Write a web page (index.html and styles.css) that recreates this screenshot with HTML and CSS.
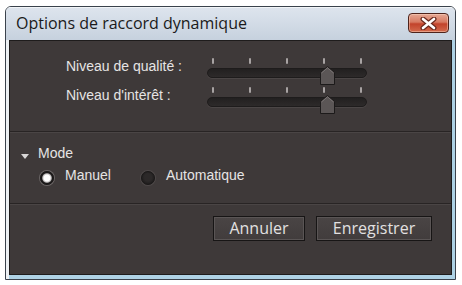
FILE: index.html
```html
<!DOCTYPE html>
<html lang="fr">
<head>
  <meta charset="UTF-8" />
  <title>Options de raccord dynamique</title>
  <link rel="stylesheet" href="styles.css">
</head>
<body>

  <div class="window">
    <!-- Title bar -->
    <div class="titlebar">
      <span class="title">Options de raccord dynamique</span>
      <button class="close" aria-label="Fermer">
        <svg width="17" height="13" viewBox="0 0 17 13">
          <path d="M3 2 L14 11 M14 2 L3 11" stroke="#6a2a1e" stroke-width="5" stroke-linecap="round" />
          <path d="M3 2 L14 11 M14 2 L3 11" stroke="#ffffff" stroke-width="2.6" stroke-linecap="round" />
        </svg>
      </button>
    </div>

    <div class="frame">
      <div class="content">

        <!-- Sliders -->
        <div class="section sliders">
          <div class="row">
            <span class="label">Niveau de qualité :</span>
            <div class="slider">
              <div class="ticks"><i></i><i></i><i></i><i></i><i></i></div>
              <div class="track"></div>
              <svg class="thumb" style="left: 113px" width="15" height="19" viewBox="0 0 15 19">
                <polygon points="7.5,0.5 14.5,6.5 14.5,18.5 0.5,18.5 0.5,6.5" fill="#5b5656" stroke="#1c1a1a" />
                <polyline points="1.5,7 7.5,1.8 13.5,7" fill="none" stroke="#7a7474" />
              </svg>
            </div>
          </div>
          <div class="row">
            <span class="label">Niveau d'intérêt :</span>
            <div class="slider">
              <div class="ticks"><i></i><i></i><i></i><i></i><i></i></div>
              <div class="track"></div>
              <svg class="thumb" style="left: 113px" width="15" height="19" viewBox="0 0 15 19">
                <polygon points="7.5,0.5 14.5,6.5 14.5,18.5 0.5,18.5 0.5,6.5" fill="#5b5656" stroke="#1c1a1a" />
                <polyline points="1.5,7 7.5,1.8 13.5,7" fill="none" stroke="#7a7474" />
              </svg>
            </div>
          </div>
        </div>

        <!-- Mode -->
        <div class="section mode">
          <div class="mode-head">
            <span class="caret"></span>
            <span>Mode</span>
          </div>
          <div class="radios">
            <label class="radio"><span class="dot on"></span>Manuel</label>
            <label class="radio"><span class="dot"></span>Automatique</label>
          </div>
        </div>

        <!-- Buttons -->
        <div class="section actions">
          <button class="btn">Annuler</button>
          <button class="btn">Enregistrer</button>
        </div>

      </div>
    </div>
  </div>

</body>
</html>
```

FILE: styles.css
```css
/* Page */
body {
  margin: 0;
  background: #ffffff;
  font-family: 'Liberation Sans', Arial, sans-serif;
}

/* Window frame */
.window {
  margin: 6px 0 0 5px;
  width: 451px;
  height: 274px;
  box-sizing: border-box;
  border: 1px solid #3a424c;
  border-radius: 6px 6px 0 0;
  display: flex;
  flex-direction: column;
  overflow: hidden;
}

.titlebar {
  height: 33px;
  flex: none;
  display: flex;
  align-items: flex-start;
  justify-content: space-between;
  background: linear-gradient(#dde4ed, #d2dbe6 50%, #c6d1de);
  border-top: 1px solid #f2f5f8;
  box-sizing: border-box;
}

.title {
  font-family: 'Open Sans', sans-serif;
  font-size: 16px;
  line-height: 30px;
  color: #1a1a1a;
  padding-left: 10px;
}

.close {
  margin: 5px 6px 0 0;
  width: 41px;
  height: 20px;
  padding: 0;
  border: 1px solid #4e231b;
  border-radius: 4px;
  background: linear-gradient(#e6a894, #d77a62 45%, #c2432b 55%, #d36a4d);
  box-shadow: inset 0 0 0 1px rgba(255, 220, 200, 0.45);
  display: flex;
  align-items: center;
  justify-content: center;
}

.frame {
  flex: 1;
  display: flex;
  padding: 0 3px 4px 3px;
  background: linear-gradient(to right, #edf1f4 3px, #aed2e5 3px);
}

.content {
  flex: 1;
  display: flex;
  flex-direction: column;
  background: #3e3939;
  border: 1px solid #1e1c1c;
  color: #e6e4e4;
  font-size: 14px;
  line-height: 16px;
}

/* Sections and separators */
.section {
  border-bottom: 1px solid #282424;
  box-shadow: 0 1px 0 #4a4545;
}

.sliders {
  height: 91px;
  padding: 17px 0 0 56px;
  box-sizing: border-box;
}

.row {
  display: flex;
  height: 29px;
}

.label {
  width: 141px;
  flex: none;
}

/* Slider */
.slider {
  position: relative;
  width: 160px;
}

.ticks {
  display: flex;
  justify-content: space-between;
  padding: 0 5px;
  height: 7px;
}

.ticks i {
  width: 2px;
  height: 6px;
  background: #a8a3a3;
  border-radius: 1px;
}

.track {
  margin-top: 3px;
  height: 10px;
  box-sizing: border-box;
  border: 1px solid #1e1c1c;
  border-radius: 5px;
  background: linear-gradient(#222020, #2d2a2a);
  box-shadow: 0 1px 0 #4b4646;
}

.thumb {
  position: absolute;
  top: 8px;
}

/* Mode */
.mode {
  height: 72px;
  padding: 13px 0 0 11px;
  box-sizing: border-box;
}

.mode-head {
  display: flex;
  align-items: center;
  gap: 9px;
}

.caret {
  width: 0;
  height: 0;
  margin-top: 6px;
  border-left: 4px solid transparent;
  border-right: 4px solid transparent;
  border-top: 5px solid #d8d6d6;
}

.radios {
  display: flex;
  gap: 30px;
  margin-top: 6px;
  padding-left: 19px;
}

.radio {
  display: flex;
  align-items: flex-start;
  gap: 11px;
}

.dot {
  width: 14px;
  height: 14px;
  margin-top: 4px;
  box-sizing: border-box;
  border-radius: 50%;
  border: 1px solid #1a1818;
  background: radial-gradient(circle at 50% 45%, #2c2929 40%, #1f1d1d 75%);
  box-shadow: 0 0 0 1px #4d4848;
}

.dot.on {
  background: radial-gradient(circle at 50% 50%, #ffffff 35%, #bdbaba 50%, #1c1a1a 62%);
  box-shadow: 0 0 0 1px #6a6565;
}

/* Buttons */
.actions {
  flex: 1;
  border: none;
  box-shadow: none;
  display: flex;
  justify-content: flex-end;
  align-items: flex-start;
  gap: 11px;
  padding: 12px 19px 0 0;
}

.btn {
  height: 25px;
  padding: 0 12px;
  font-family: 'Open Sans', sans-serif;
  font-size: 16px;
  line-height: 21px;
  color: #e2e0e0;
  background: linear-gradient(#4a4545, #413c3c);
  border: 1px solid #171515;
  box-shadow: inset 0 0 0 1px #5a5555;
}

.btn:first-child {
  width: 92px;
}

.btn:last-child {
  width: 116px;
}
```
